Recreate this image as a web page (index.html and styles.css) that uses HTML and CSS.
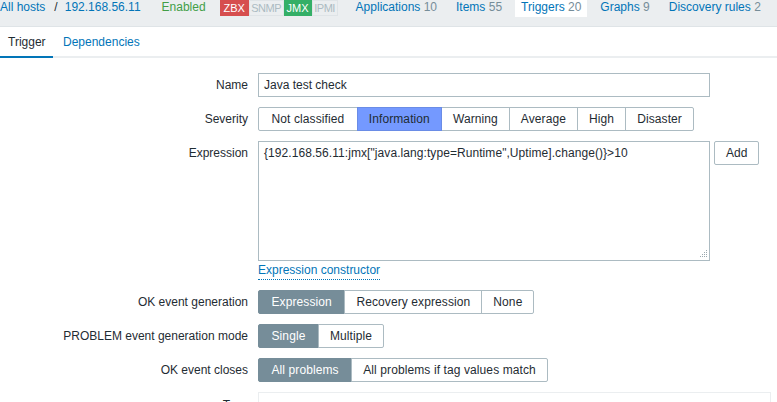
FILE: index.html
```html
<!DOCTYPE html>
<html>
<head>
<meta charset="utf-8">
<link rel="stylesheet" href="styles.css">
</head>
<body>
<header class="hostbar">
  <div class="crumbs">
    <a class="link">All hosts</a>
    <span class="sep">/</span>
    <a class="link">192.168.56.11</a>
  </div>
  <span class="enabled">Enabled</span>
  <div class="badges">
    <span class="badge red b-zbx">ZBX</span>
    <span class="badge grey b-snmp">SNMP</span>
    <span class="badge green b-jmx">JMX</span>
    <span class="badge grey b-ipmi">IPMI</span>
  </div>
  <nav class="hostnav">
    <a class="navitem"><span class="link">Applications</span> <span class="count">10</span></a>
    <a class="navitem"><span class="link">Items</span> <span class="count">55</span></a>
    <a class="navitem selected"><span class="link">Triggers</span> <span class="count">20</span></a>
    <a class="navitem"><span class="link">Graphs</span> <span class="count">9</span></a>
    <a class="navitem"><span class="link">Discovery rules</span> <span class="count">2</span></a>
  </nav>
</header>
<div class="tabs">
  <span class="tab active">Trigger</span>
  <span class="tab">Dependencies</span>
</div>
<form class="form">
  <div class="row">
    <label class="lbl">Name</label>
    <div class="field"><div class="input wide">Java test check</div></div>
  </div>
  <div class="row">
    <label class="lbl">Severity</label>
    <div class="field">
      <div class="radios sev">
        <span class="rb">Not classified</span>
        <span class="rb info">Information</span>
        <span class="rb">Warning</span>
        <span class="rb">Average</span>
        <span class="rb">High</span>
        <span class="rb">Disaster</span>
      </div>
    </div>
  </div>
  <div class="row">
    <label class="lbl">Expression</label>
    <div class="field col">
      <div class="exprline">
        <div class="textarea">{192.168.56.11:jmx["java.lang:type=Runtime",Uptime].change()}&gt;10
          <svg class="grip" width="9" height="9" viewBox="0 0 9 9"><g fill="#9aa8ae"><rect x="7" y="0" width="1" height="1"/><rect x="7" y="2" width="1" height="1"/><rect x="5" y="2" width="1" height="1"/><rect x="7" y="4" width="1" height="1"/><rect x="5" y="4" width="1" height="1"/><rect x="3" y="4" width="1" height="1"/><rect x="7" y="6" width="1" height="1"/><rect x="5" y="6" width="1" height="1"/><rect x="3" y="6" width="1" height="1"/><rect x="1" y="6" width="1" height="1"/></g></svg>
        </div>
        <span class="btn">Add</span>
      </div>
      <a class="constructor">Expression constructor</a>
    </div>
  </div>
  <div class="row">
    <label class="lbl">OK event generation</label>
    <div class="field">
      <div class="radios">
        <span class="rb on">Expression</span>
        <span class="rb">Recovery expression</span>
        <span class="rb">None</span>
      </div>
    </div>
  </div>
  <div class="row">
    <label class="lbl">PROBLEM event generation mode</label>
    <div class="field">
      <div class="radios">
        <span class="rb on">Single</span>
        <span class="rb">Multiple</span>
      </div>
    </div>
  </div>
  <div class="row">
    <label class="lbl">OK event closes</label>
    <div class="field">
      <div class="radios">
        <span class="rb on">All problems</span>
        <span class="rb">All problems if tag values match</span>
      </div>
    </div>
  </div>
  <div class="row">
    <label class="lbl tags">Tags</label>
    <div class="field"><div class="tagbox"></div></div>
  </div>
</form>
</body>
</html>
```
FILE: styles.css
```css
* { box-sizing: border-box; }
html, body { margin: 0; padding: 0; background: #fff; overflow: hidden; }
body {
  font-family: "Liberation Sans", Arial, sans-serif;
  font-size: 12px;
  color: #1f2c33;
  width: 777px;
  height: 402px;
}
.link { color: #0275b8; }
a { text-decoration: none; }

.hostbar {
  display: flex;
  align-items: flex-start;
  height: 27px;
  background: #ebeef0;
  border-bottom: 1px solid #dfe4e7;
  white-space: nowrap;
  line-height: 15px;
}
.crumbs { display: flex; }
.sep { margin: 0 7px 0 9px; color: #1f2c33; }
.enabled { color: #429e47; margin-left: 21px; }
.badges { display: flex; margin-left: 14px; }
.badge {
  font-size: 11px;
  line-height: 14px;
  height: 16px;
  text-align: center;
  border: 1px solid transparent;
}
.b-zbx { width: 29px; }
.b-snmp { width: 35px; }
.b-jmx { width: 28px; }
.b-ipmi { width: 26px; }
.badge.red { background: #d64e4e; color: #fff; border-color: #d64e4e; }
.badge.green { background: #34af67; color: #fff; border-color: #34af67; }
.badge.grey { color: #acbbc2; border-color: #dfe4e7; letter-spacing: -0.5px; }
.hostnav { display: flex; margin-left: 12px; gap: 7px; }
.navitem { padding: 0 6px 2px; height: 17px; }
.navitem.selected { background: #fff; }
.count { color: #768d99; }

.tabs {
  display: flex;
  height: 31px;
  border-bottom: 2px solid #ebeef0;
  line-height: 26px;
  padding-top: 2px;
}
.tab { color: #0275b8; padding: 0 10px 0 10px; }
.tab.active {
  color: #1f2c33;
  padding-left: 8px;
  border-bottom: 2px solid #0275b8;
  margin-bottom: -2px;
  width: 53px;
  height: 29px;
}

.form { padding-top: 15px; display: flex; flex-direction: column; gap: 10px; }
.row { display: flex; align-items: flex-start; }
.lbl { width: 248px; text-align: right; line-height: 24px; }
.field { margin-left: 10px; }
.col { display: flex; flex-direction: column; }
.input {
  height: 24px;
  border: 1px solid #acbbc2;
  padding: 0 5px;
  line-height: 22px;
}
.wide { width: 452px; }
.radios { display: flex; }
.rb {
  height: 24px;
  line-height: 22px;
  padding: 0 11px;
  border: 1px solid #acbbc2;
  margin-left: -1px;
  white-space: nowrap;
  letter-spacing: 0.1px;
}
.rb:first-child { margin-left: 0; padding: 0 12.5px; border-radius: 2px 0 0 2px; }
.rb:last-child { border-radius: 0 2px 2px 0; }
.rb.info { background: #7499ff; border-color: #6a8ce6; position: relative; z-index: 1; color: #1f2c33; }
.rb.on { background: #768d99; border-color: #768d99; color: #fff; }

.exprline { display: flex; align-items: flex-start; }
.textarea {
  position: relative;
  width: 452px;
  height: 120px;
  border: 1px solid #acbbc2;
  padding: 4px 5px;
  line-height: 14px;
  letter-spacing: 0.07px;
}
.grip { position: absolute; right: 1px; bottom: 1px; }
.btn {
  margin-left: 4px;
  height: 24px;
  line-height: 22px;
  padding: 0 11px;
  border: 1px solid #acbbc2;
  border-radius: 2px;
}
.constructor {
  color: #0275b8;
  align-self: flex-start;
  margin-top: 2px;
  line-height: 14px;
  border-bottom: 1px dotted #0275b8;
  height: 17px;
}
.lbl.tags { line-height: 14px; padding-top: 6px; }
.tagbox {
  width: 513px;
  height: 60px;
  border: 1px solid #ebeef0;
}
```
